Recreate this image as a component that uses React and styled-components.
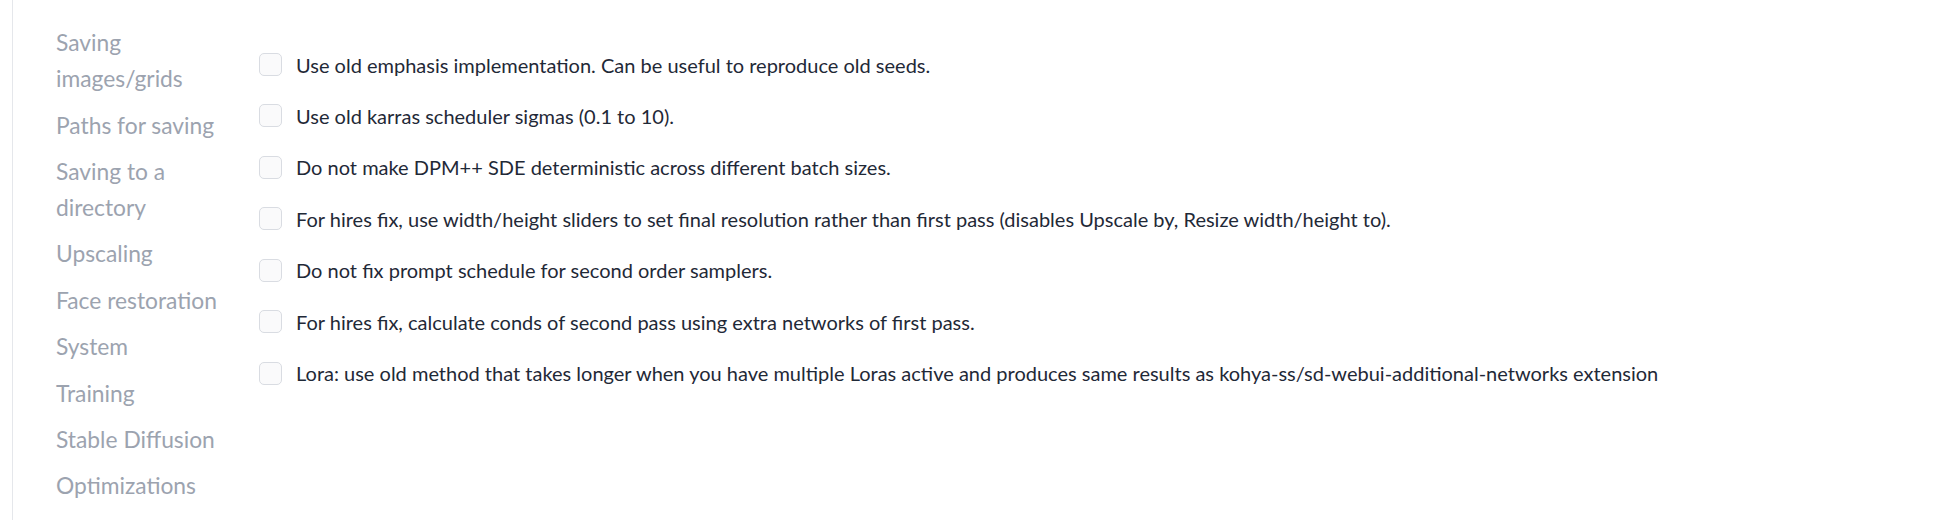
import React from "react";
import styled, { createGlobalStyle } from "styled-components";

const GlobalStyle = createGlobalStyle`
  html, body {
    margin: 0;
    padding: 0;
    background: #ffffff;
  }
  body {
    font-family: Lato, "Liberation Sans", sans-serif;
  }
`;

const Page = styled.div`
  display: flex;
  height: 520px;
  margin-left: 12px;
  border-left: 1px solid #e5e7eb;
  background: #ffffff;
`;

const Nav = styled.nav`
  flex-shrink: 0;
  width: 203px;
  padding: 24.2px 0 0 43px;
  display: flex;
  flex-direction: column;
  gap: 10.4px;
`;

const NavItem = styled.div`
  width: 180px;
  font-size: 22.8px;
  line-height: 36px;
  color: #9ca3af;
  cursor: pointer;
`;

const Options = styled.div`
  flex: 1;
  display: flex;
  flex-direction: column;
  gap: 23.45px;
  padding-top: 50.5px;
`;

const Row = styled.label`
  display: flex;
  align-items: center;
  gap: 14px;
  height: 28px;
  cursor: pointer;
`;

const Box = styled.span`
  flex-shrink: 0;
  width: 21px;
  height: 21px;
  border: 1px solid #d9dce2;
  border-radius: 5px;
  background: #fafafb;
`;

const Text = styled.span`
  font-size: 20px;
  color: #1f2937;
  white-space: nowrap;
`;

const SECTIONS = [
  "Saving images/grids",
  "Paths for saving",
  "Saving to a directory",
  "Upscaling",
  "Face restoration",
  "System",
  "Training",
  "Stable Diffusion",
  "Optimizations",
];

const OPTIONS = [
  "Use old emphasis implementation. Can be useful to reproduce old seeds.",
  "Use old karras scheduler sigmas (0.1 to 10).",
  "Do not make DPM++ SDE deterministic across different batch sizes.",
  "For hires fix, use width/height sliders to set final resolution rather than first pass (disables Upscale by, Resize width/height to).",
  "Do not fix prompt schedule for second order samplers.",
  "For hires fix, calculate conds of second pass using extra networks of first pass.",
  "Lora: use old method that takes longer when you have multiple Loras active and produces same results as kohya-ss/sd-webui-additional-networks extension",
];

const App = () => {
  return (
    <>
      <GlobalStyle />
      <Page>
        <Nav>
          {SECTIONS.map((s) => (
            <NavItem key={s}>{s}</NavItem>
          ))}
        </Nav>
        <Options>
          {OPTIONS.map((o) => (
            <Row key={o}>
              <Box />
              <Text>{o}</Text>
            </Row>
          ))}
        </Options>
      </Page>
    </>
  );
};

export default App;
